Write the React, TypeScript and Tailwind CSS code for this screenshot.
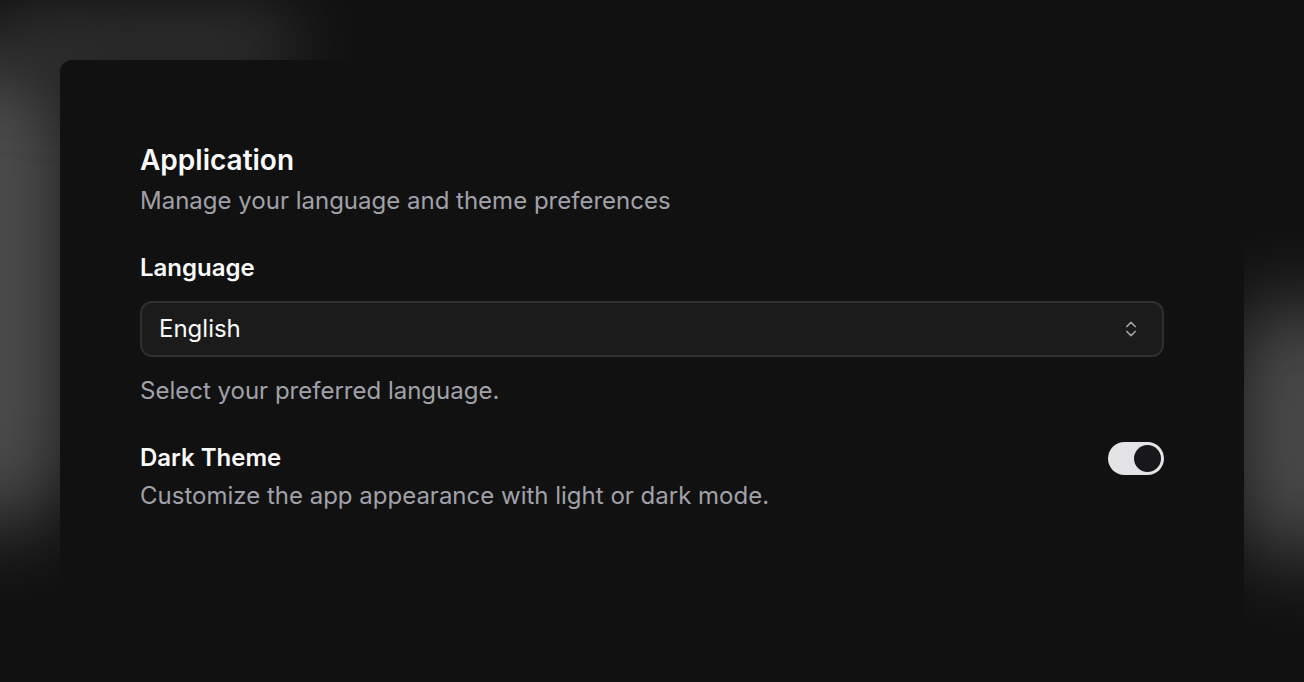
import React, { useState } from "react";
import { ChevronsUpDown } from "lucide-react";

export default function App() {
	const [dark, setDark] = useState(true);

	return (
		<div
			className="relative h-[682px] w-full overflow-hidden bg-[#111111] px-[60px] pt-[60px]"
			style={{ fontFamily: "Inter, 'Noto Sans', sans-serif" }}
		>
			{/* background glows */}
			<div className="absolute left-[-90px] top-[50px] h-[480px] w-[160px] rounded-full bg-[#4c4c4c] blur-[40px]" />
			<div className="absolute left-[0px] top-[10px] h-[70px] w-[300px] rounded-full bg-[#333333] blur-[35px]" />
			<div className="absolute left-[1236px] top-[300px] h-[260px] w-[130px] rounded-full bg-[#4c4c4c] blur-[40px]" />

			<div className="relative h-[562px] rounded-xl bg-[#111111] px-[80px] pt-[80px]">
				<h2 className="text-[28px] leading-[40px] font-semibold text-[#fafafa]">
					Application
				</h2>
				<p className="mt-[3px] text-[24px] leading-[36px] text-[#a1a1aa]">
					Manage your language and theme preferences
				</p>

				<div className="mt-[31px]">
					<label className="block text-[24px] leading-[36px] font-semibold text-[#fafafa]">
						Language
					</label>
					<button className="mt-[15px] flex h-[56px] w-full items-center justify-between rounded-xl border-2 border-[#2f2f31] bg-[#1b1b1b] pl-[17px] pr-[21px] text-left">
						<span className="text-[24px] text-[#fafafa]">English</span>
						<ChevronsUpDown className="size-[20px] text-[#a1a1aa]" strokeWidth={2} />
					</button>
					<p className="mt-[16px] text-[24px] leading-[36px] text-[#a1a1aa]">
						Select your preferred language.
					</p>
				</div>

				<div className="mt-[31px] flex items-start justify-between">
					<div>
						<p className="text-[24px] leading-[36px] font-semibold text-[#fafafa]">
							Dark Theme
						</p>
						<p className="mt-[2px] text-[24px] leading-[36px] text-[#a1a1aa]">
							Customize the app appearance with light or dark mode.
						</p>
					</div>
					<button
						onClick={() => setDark(!dark)}
						className="mt-[2px] flex h-[33px] w-[56px] items-center rounded-full bg-[#e4e4e7] p-[3px]"
					>
						<span
							className={
								dark
									? "ml-auto size-[27px] rounded-full bg-[#18181b]"
									: "size-[27px] rounded-full bg-[#18181b]"
							}
						/>
					</button>
				</div>
			</div>
		</div>
	);
}
